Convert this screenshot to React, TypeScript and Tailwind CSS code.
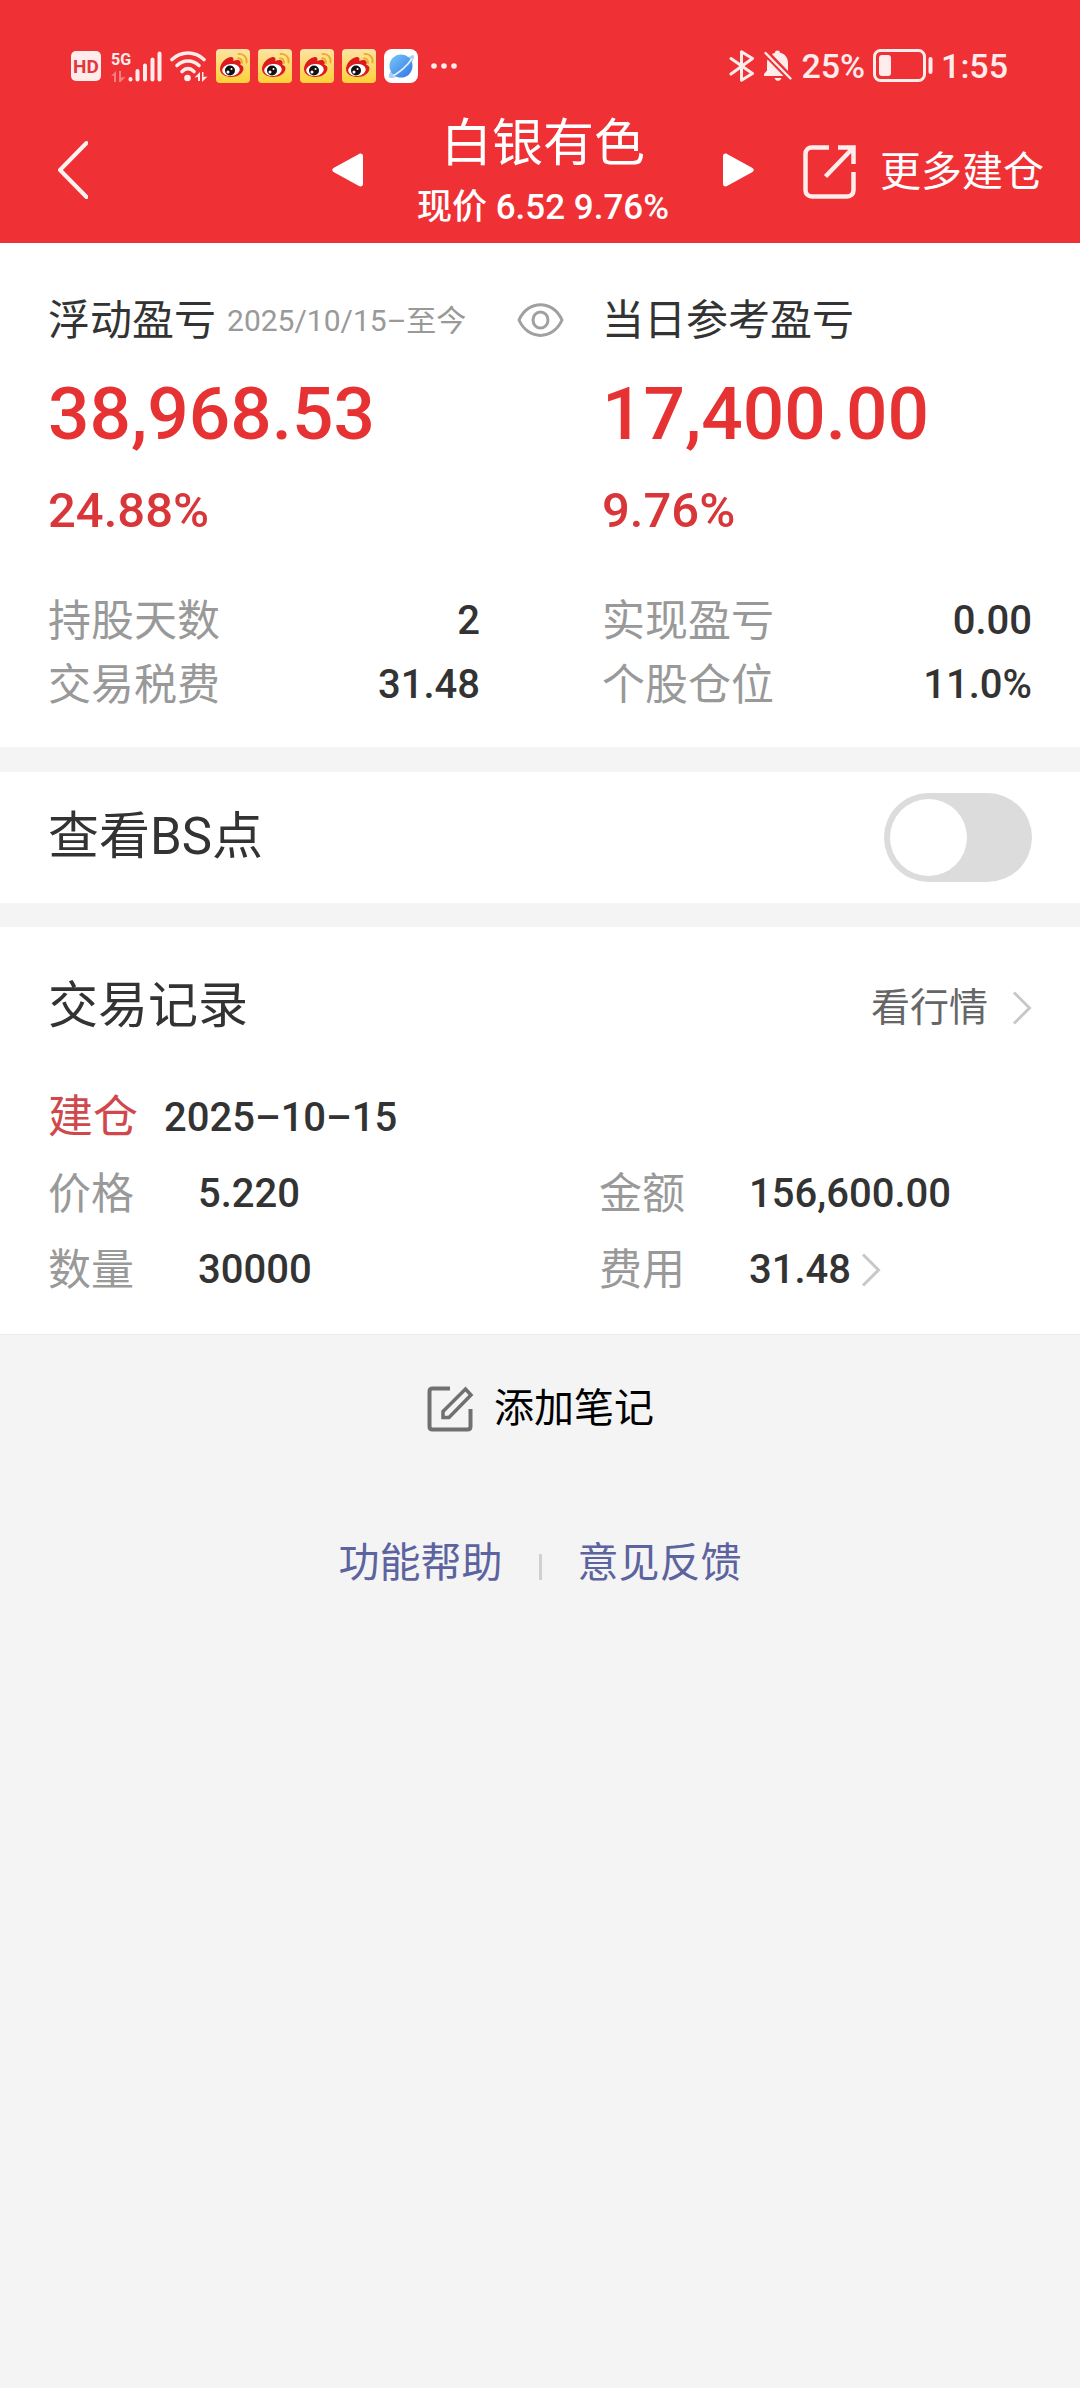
import { useState } from 'react';

const HOLDING_STATS = [
  { label: '持股天数', value: '2' },
  { label: '交易税费', value: '31.48' },
];

const TODAY_STATS = [
  { label: '实现盈亏', value: '0.00' },
  { label: '个股仓位', value: '11.0%' },
];

const RECORD_FIELDS = [
  { label: '价格', value: '5.220' },
  { label: '金额', value: '156,600.00' },
  { label: '数量', value: '30000' },
  { label: '费用', value: '31.48', hasDetail: true },
];

function SignalIcon() {
  return (
    <svg width="34" height="31" viewBox="0 0 34 31" stroke="#ffeceb" strokeWidth="4" strokeLinecap="round" aria-hidden="true">
      <path d="M2.5 28v.5M9.500 20v8.500M17 14.500v14M24.500 8.500v20M31.500 2.500v26" />
    </svg>
  );
}

function DataArrows() {
  return (
    <svg width="15" height="11" viewBox="0 0 15 11" fill="#f77f7f" aria-hidden="true">
      <path d="M0 5 5 0v11H3V4.500zM8 0h2v6.500L14.500 6 9.500 11H8z" />
    </svg>
  );
}

function WifiIcon() {
  return (
    <svg width="38" height="31" viewBox="0 0 38 31" aria-hidden="true">
      <g fill="none" stroke="#ffeceb" strokeWidth="3.600" strokeLinecap="round">
        <path d="M2 8.500C11-.2 25-.2 34 8.500" />
        <path d="M7 14.500c6.500-6 15.500-6 22 0" />
        <path d="M12 20.500c3.800-3.500 8.200-3.500 12 0" />
      </g>
      <circle cx="17.500" cy="27" r="3.300" fill="#ffeceb" />
      <path d="M24.500 26.500 30 21v9h-2v-4zM32 21h1.500v5l4-.5L32 31z" fill="#ffeceb" />
    </svg>
  );
}

function WeiboIcon() {
  return (
    <svg width="34" height="34" viewBox="0 0 34 34" role="img" aria-label="微博">
      <defs>
        <linearGradient id="weiboBg" x1="0" y1="0" x2="0" y2="1">
          <stop offset="0" stopColor="#fde3a4" />
          <stop offset="1" stopColor="#fdd137" />
        </linearGradient>
      </defs>
      <rect width="34" height="34" rx="4" fill="url(#weiboBg)" />
      <path
        d="M4 20C4 15 9 9 14 8.200c3-.5 4 1.300 3.300 3.800 3-1.300 6.500-1.500 7.200.8.400 1.200 0 2.200-.2 3 2.400.8 3.700 2.400 3 5C26.300 25.500 20.500 28.200 15 28 9 27.800 4 25 4 20z"
        fill="#dd1a1d"
      />
      <ellipse cx="15" cy="21" rx="8.800" ry="6" fill="#fff" transform="rotate(-7 15 21)" />
      <circle cx="14" cy="21.500" r="5" fill="#111" />
      <circle cx="12" cy="23" r="1.500" fill="#fff" />
      <circle cx="15.500" cy="20" r="1" fill="#fff" />
      <g fill="none" stroke="#eea92c" strokeWidth="1.800" strokeLinecap="round">
        <path d="M22 9.500c2.500-.4 4.500 1.800 4 4.500" />
        <path d="M22.500 5c5-.7 9 3.800 8 8.500" />
      </g>
    </svg>
  );
}

function BrowserIcon() {
  return (
    <svg width="34" height="34" viewBox="0 0 34 34" role="img" aria-label="浏览器">
      <defs>
        <linearGradient id="planet" x1="0" y1="0" x2="1" y2="1">
          <stop offset="0" stopColor="#79c8f7" />
          <stop offset="1" stopColor="#2f74e6" />
        </linearGradient>
      </defs>
      <rect width="34" height="34" rx="8" fill="#fff" />
      <path d="M25 8c3-2 5-2.500 5-.5 0 4-5 11-11 16S6 30.500 5 28c-.5-1.500.5-4 2-6z" fill="#a9cdf6" />
      <circle cx="17" cy="17" r="11.500" fill="url(#planet)" />
      <path d="M9 26.500C15 24 24.500 15.500 28 9.500" fill="none" stroke="#e4f1ff" strokeWidth="1.600" />
    </svg>
  );
}

function BluetoothIcon() {
  return (
    <svg width="26" height="32" viewBox="0 0 26 32" fill="none" stroke="#ffeceb" strokeWidth="3" strokeLinecap="round" strokeLinejoin="round" aria-hidden="true">
      <path d="M2 8.500 23.500 23.500 12.500 30.300V1.700L23.500 8.500 2 24" />
    </svg>
  );
}

function MutedBellIcon() {
  return (
    <svg width="30" height="32" viewBox="0 0 30 32" fill="#ffeceb" aria-hidden="true">
      <path d="M4.500 9.500 20.500 26H1v-2l3-3.500V13c0-1.300.1-2.400.5-3.500z" />
      <path d="M9 4.200c1-.8 2-1.200 3-1.400C12 1.200 13 .5 14.500.5S17 1.200 17 2.800c5 1 8 5 8 10.200v8z" />
      <path d="M11.500 28h7c-.8 2-2 2.800-3.500 2.800s-2.700-.8-3.500-2.800z" />
      <path d="M2.500 3 27.500 28.500" stroke="#ffeceb" strokeWidth="2.400" strokeLinecap="round" />
    </svg>
  );
}

function BatteryIcon() {
  return (
    <svg width="60" height="34" viewBox="0 0 60 34" aria-hidden="true">
      <rect x="1.500" y="1.500" width="50" height="30" rx="6" fill="none" stroke="#ffeceb" strokeWidth="3" />
      <rect x="6" y="6" width="12" height="21" rx="3" fill="#ffeceb" />
      <rect x="55.500" y="8" width="4" height="17" rx="2" fill="#ffeceb" />
    </svg>
  );
}

function ChevronRight() {
  return (
    <svg width="20" height="34" viewBox="0 0 20 34" fill="none" stroke="#c8c8c8" strokeWidth="3" aria-hidden="true">
      <path d="M2 1.500 17.500 17 2 32.500" />
    </svg>
  );
}

function StatusBar() {
  return (
    <div className="flex h-[34px] items-center justify-between pl-[71px] pr-[72px] text-[34px] leading-none text-[#ffeceb]">
      <div className="flex items-center gap-2">
        <span className="flex h-[30px] w-[30px] items-center justify-center rounded-[5px] bg-[#ffeceb] text-[19px] font-bold text-[#e2383c]">
          HD
        </span>
        <div className="flex items-end">
          <div className="flex w-[19px] flex-col gap-[3px] pl-[2px]">
            <span className="text-[16px] font-bold leading-[17px]">5G</span>
            <DataArrows />
          </div>
          <SignalIcon />
        </div>
        <WifiIcon />
        <WeiboIcon />
        <WeiboIcon />
        <WeiboIcon />
        <WeiboIcon />
        <BrowserIcon />
        <svg className="ml-1" width="28" height="6" viewBox="0 0 28 6" fill="#ffeceb" aria-hidden="true">
          <circle cx="4" cy="3" r="2.800" />
          <circle cx="14" cy="3" r="2.800" />
          <circle cx="24" cy="3" r="2.800" />
        </svg>
      </div>
      <div className="flex items-center gap-2 font-medium">
        <BluetoothIcon />
        <MutedBellIcon />
        <span>25%</span>
        <BatteryIcon />
        <span>1:55</span>
      </div>
    </div>
  );
}

function NavBar() {
  return (
    <nav className="mt-[14px] grid h-[146px] grid-cols-[1fr_auto_1fr] items-center pl-[42px] pr-9">
      <button type="button" aria-label="返回" className="justify-self-start pl-3">
        <svg width="34" height="60" viewBox="0 0 34 60" fill="none" stroke="#fff3f0" strokeWidth="4" strokeLinecap="round" strokeLinejoin="round">
          <path d="M32.500 3 6 30l26.500 27" />
        </svg>
      </button>

      <div className="flex w-[422px] items-center justify-between">
        <button type="button" aria-label="上一只">
          <svg width="32" height="34" viewBox="0 0 32 34" fill="#fff">
            <path d="M1.500 15 27 1c2-1 4 0 4 2v28c0 2-2 3-4 2L1.500 19c-1.700-1-1.700-3 0-4z" />
          </svg>
        </button>
        <div className="flex flex-col items-center pt-2 text-white">
          <h1 className="text-[51px] leading-[68px]">白银有色</h1>
          <p className="text-[35px] font-medium leading-[60px]">现价 6.52 9.76%</p>
        </div>
        <button type="button" aria-label="下一只">
          <svg width="32" height="34" viewBox="0 0 32 34" fill="#fff">
            <path d="M30.500 15 5 1C3 0 1 1 1 3v28c0 2 2 3 4 2l25.500-14c1.700-1 1.700-3 0-4z" />
          </svg>
        </button>
      </div>

      <button type="button" className="flex items-center gap-6 justify-self-end pt-[3px] text-[41px] leading-[60px] text-white">
        <svg width="53" height="54" viewBox="0 0 53 54" fill="none" stroke="#ffeceb" strokeWidth="4.500">
          <path d="M26 2.500H9C5 2.500 2.500 5 2.500 9v36c0 4 2.500 6.500 6.500 6.500h35c4 0 6.500-2.500 6.500-6.500V27" />
          <path d="M35 2.500h15.500V19M50 3 22.500 31.500" />
        </svg>
        更多建仓
      </button>
    </nav>
  );
}

function StatList({ items }: { items: { label: string; value: string }[] }) {
  return (
    <dl className="mt-12">
      {items.map(({ label, value }) => (
        <div key={label} className="flex items-center justify-between leading-[64px]">
          <dt className="text-[43px] text-[#999]">{label}</dt>
          <dd className="text-[40px] font-medium text-[#333]">{value}</dd>
        </div>
      ))}
    </dl>
  );
}

export default function App() {
  const [hidden, setHidden] = useState(false);
  const [showBsPoints, setShowBsPoints] = useState(false);

  const mask = (value: string) => (hidden ? '****' : value);

  return (
    <div className="min-h-screen bg-[#f4f4f4] font-['Roboto','Noto_Sans_CJK_SC',sans-serif] text-[#333]">
      <header className="bg-[#ef3136] pt-[49px]">
        <StatusBar />
        <NavBar />
      </header>

      <main>
        <section className="grid grid-cols-[6fr_5fr] gap-x-[38px] bg-white px-12 pb-[30px] pt-[49px]">
          <div>
            <div className="flex h-14 items-center">
              <h2 className="text-[42px]">浮动盈亏</h2>
              <span className="ml-[11px] text-[30px] text-[#999]">2025/10/15–至今</span>
              <button type="button" aria-label="隐藏金额" className="ml-auto" onClick={() => setHidden((prev) => !prev)}>
                <svg width="47" height="34" viewBox="0 0 47 34" fill="none" stroke="#a0a0a0" strokeWidth="3">
                  <path d="M2 17C11-3.500 36-3.500 45 17 36 37.500 11 37.500 2 17z" strokeLinejoin="round" />
                  <ellipse cx="23.500" cy="17" rx="7.500" ry="8" />
                </svg>
              </button>
            </div>
            <p className="mt-7 text-[73px] font-medium leading-[76px] text-[#e63232]">{mask('38,968.53')}</p>
            <p className="mt-[29px] text-[49px] font-medium leading-[60px] text-[#d9363a]">{mask('24.88%')}</p>
            <div className="pr-[84px]">
              <StatList items={HOLDING_STATS} />
            </div>
          </div>

          <div>
            <div className="flex h-14 items-center">
              <h2 className="text-[42px]">当日参考盈亏</h2>
            </div>
            <p className="mt-7 text-[73px] font-medium leading-[76px] text-[#e63232]">{mask('17,400.00')}</p>
            <p className="mt-[29px] text-[49px] font-medium leading-[60px] text-[#d9363a]">{mask('9.76%')}</p>
            <StatList items={TODAY_STATS} />
          </div>
        </section>

        <section className="mt-[25px] flex h-[131px] items-center justify-between bg-white px-12">
          <label htmlFor="bs-points" className="text-[51px]">
            查看BS点
          </label>
          <input
            id="bs-points"
            type="checkbox"
            role="switch"
            checked={showBsPoints}
            onChange={(e) => setShowBsPoints(e.target.checked)}
            className="flex h-[89px] w-[148px] appearance-none items-center rounded-full bg-[#dcdcdc] px-[6px] before:h-[77px] before:w-[77px] before:rounded-full before:bg-white before:content-[''] checked:justify-end checked:bg-[#ef3136]"
          />
        </section>

        <section className="mt-6 border-b border-[#ececec] bg-white px-12 pb-[26px] pt-[47px]">
          <div className="flex h-16 items-center justify-between">
            <h2 className="text-[50px]">交易记录</h2>
            <a href="#quote" className="flex items-center gap-6 pt-1 text-[39px] text-[#666]">
              看行情
              <ChevronRight />
            </a>
          </div>

          <div className="mt-[50px] flex h-[60px] items-center gap-[26px]">
            <span className="text-[45px] text-[#d0484c]">建仓</span>
            <time dateTime="2025-10-15" className="text-[40px] font-medium">
              2025–10–15
            </time>
          </div>

          <dl className="mt-2 grid grid-cols-[56%_44%]">
            {RECORD_FIELDS.map(({ label, value, hasDetail }) => (
              <div key={label} className="flex h-[76px] items-center">
                <dt className="w-[150px] text-[43px] text-[#999]">{label}</dt>
                <dd className="flex items-center gap-[10px] text-[40px] font-medium">
                  {value}
                  {hasDetail && <ChevronRight />}
                </dd>
              </div>
            ))}
          </dl>
        </section>
      </main>

      <footer className="flex flex-col items-center">
        <button type="button" className="mt-[44px] flex h-[60px] items-center gap-5 text-[40px] text-black">
          <svg width="48" height="48" viewBox="0 0 48 48" fill="none" stroke="#707070" strokeWidth="4">
            <path d="M24 3.500H6.500c-2 0-3 1-3 3v35c0 2 1 3 3 3h35c2 0 3-1 3-3V24" />
            <path d="M17 32.500v-6L39.500 4l5.500 6-22 22.500z" strokeWidth="3.500" />
          </svg>
          添加笔记
        </button>

        <div className="mt-[99px] flex h-[50px] items-center text-[41px] leading-[50px] text-[#5c639f]">
          <a href="#help">功能帮助</a>
          <span className="mx-9 mt-2 h-[26px] w-[3px] bg-[#d0d0d0]" />
          <a href="#feedback">意见反馈</a>
        </div>
      </footer>
    </div>
  );
}
